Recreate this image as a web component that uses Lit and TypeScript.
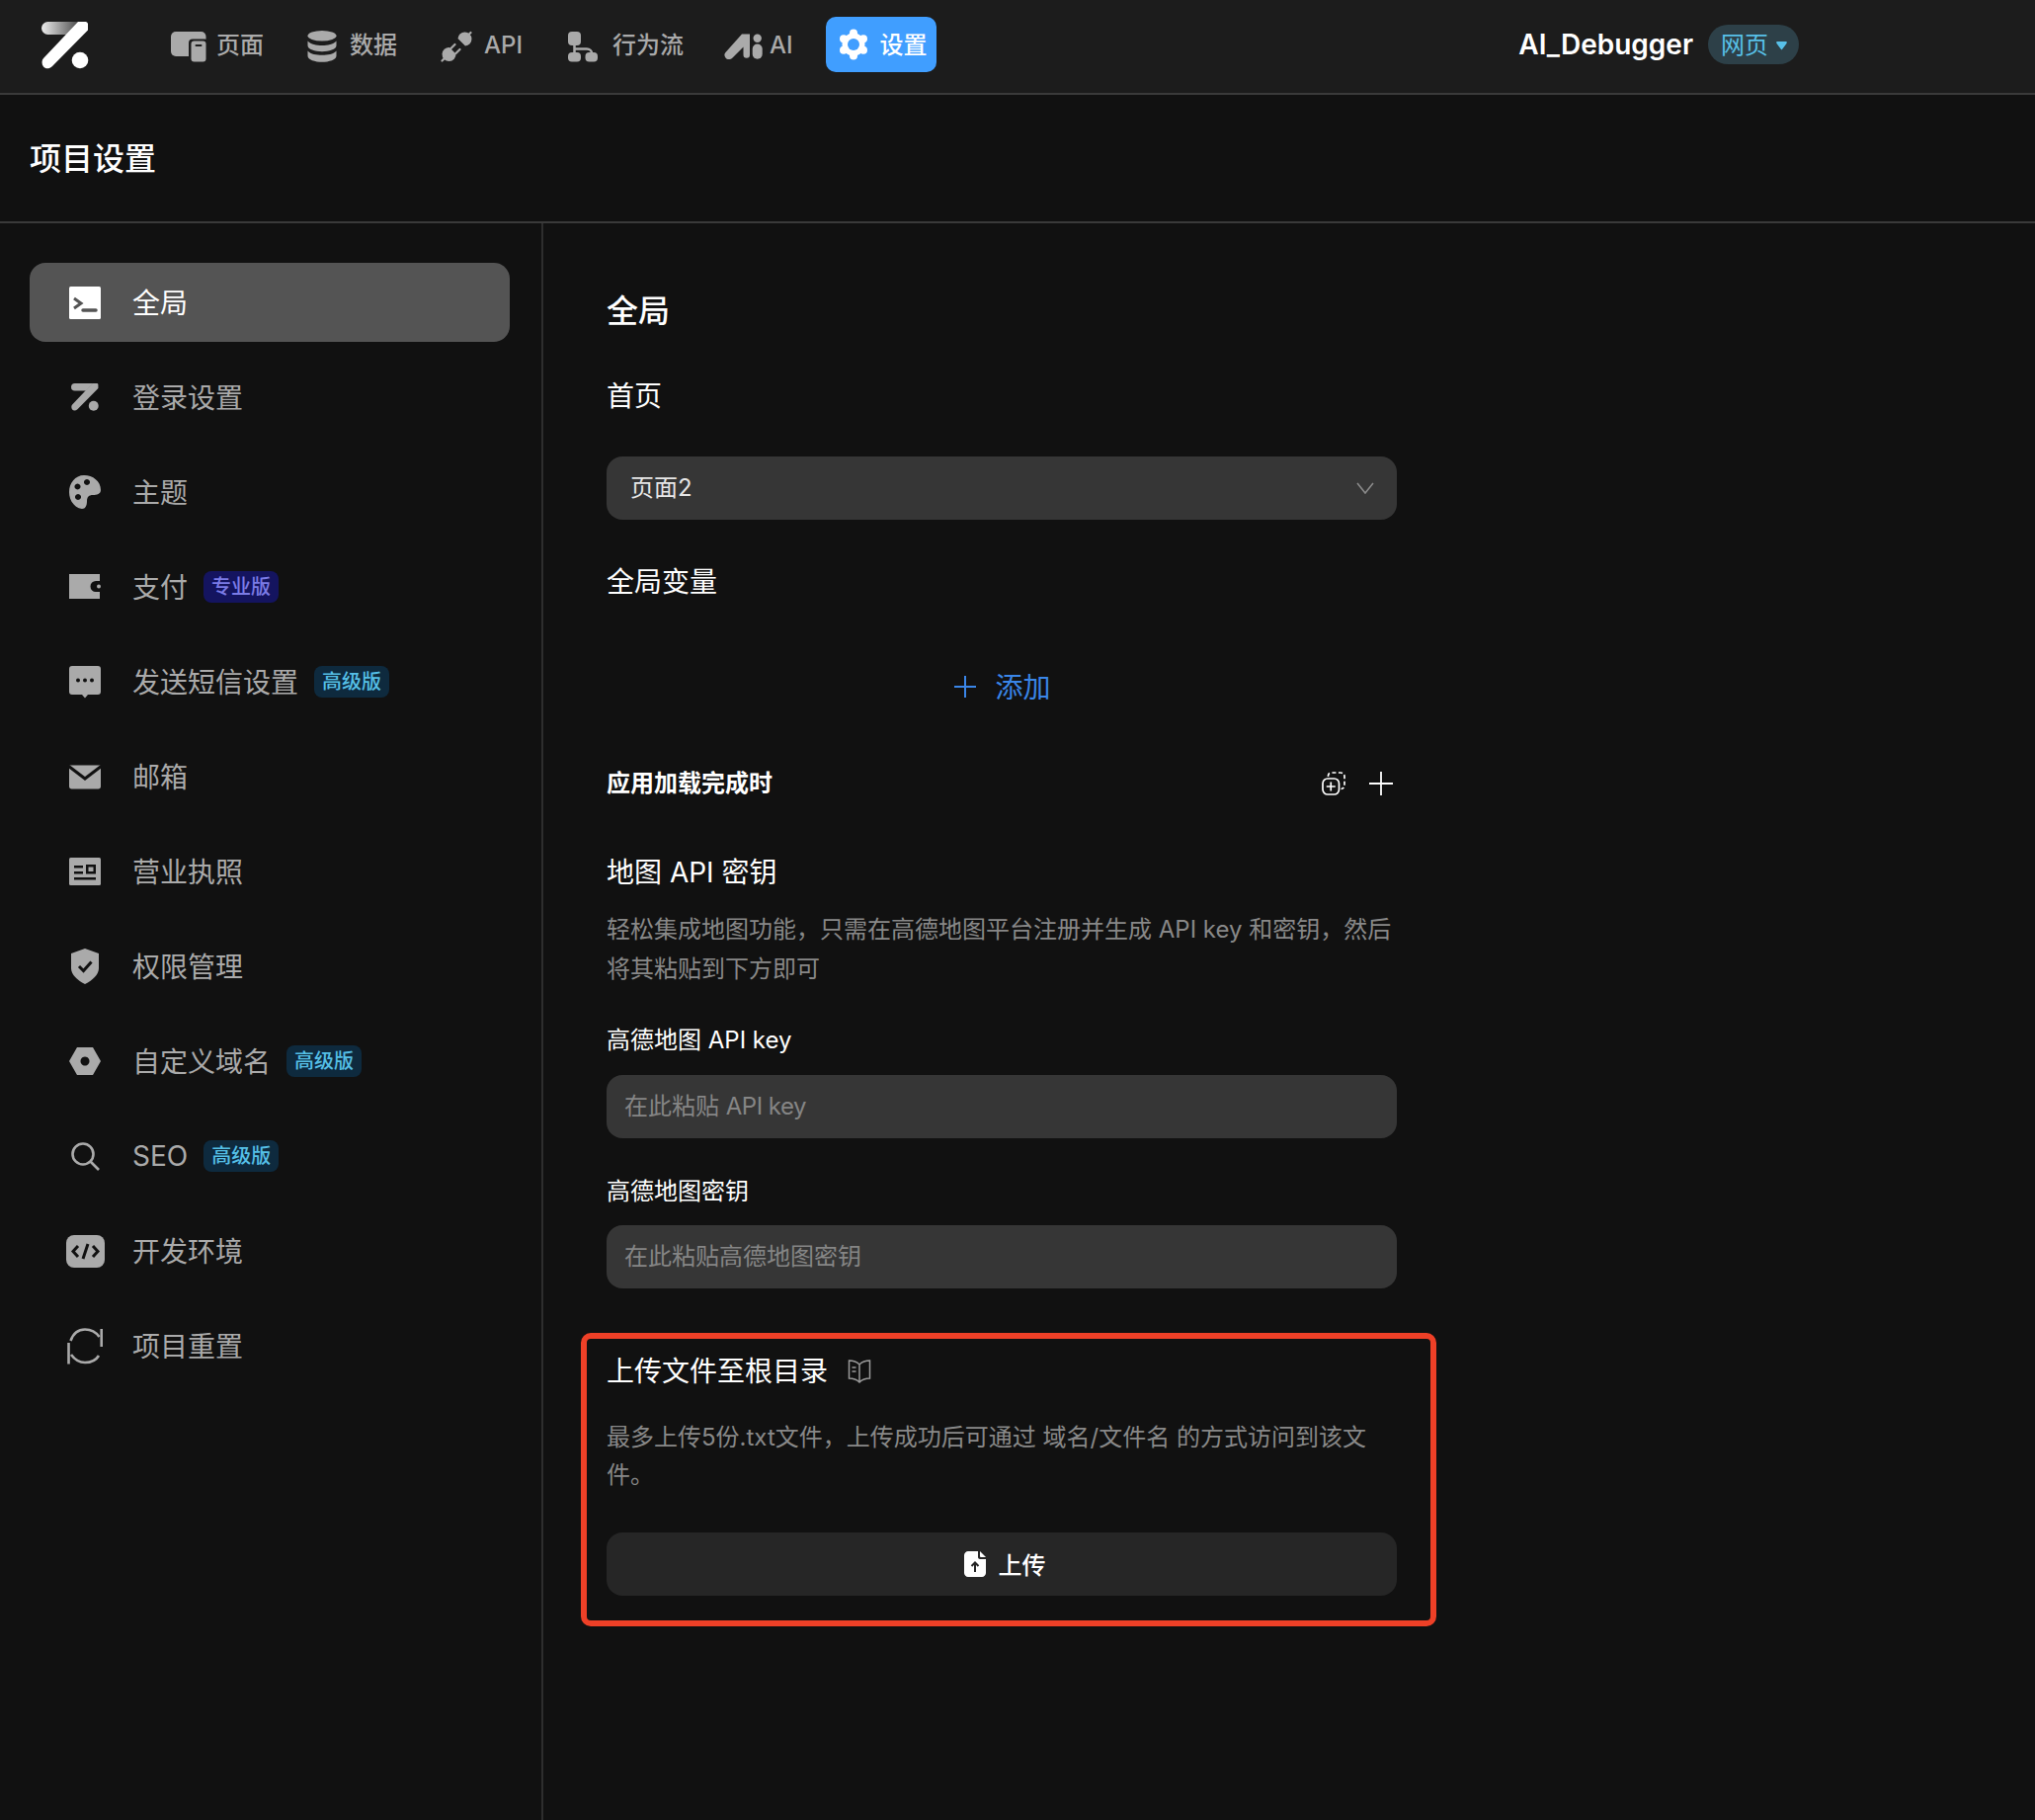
import { LitElement, html, css } from "lit";
import { customElement } from "lit/decorators.js";

const diagPath = "M37 0H44.500C46 0 47 1 47 2.500V8.500L11 45C8 48 4 48 2 45.500C0 43 0 39 2 37Z";
const barPath = "M6.500 0H38L26 13H6.500A6.500 6.500 0 0 1 6.500 0Z";
const G = "#aaaaaa";
const D = "#111111";
const H = "#1c1c1c";

const navItems = [
  { label: "页面", cls: "n-page", icon: html`<svg width="36" height="31" viewBox="0 0 36 31"><rect width="35.500" height="25" rx="5" fill="${G}"/><rect x="18" y="7.500" width="20" height="25" rx="4" fill="${H}"/><rect x="20.500" y="9.500" width="15" height="21" rx="3" fill="${G}"/><rect x="24.500" y="13" width="7" height="2" rx="1" fill="${H}"/></svg>` },
  { label: "数据", cls: "n-data", icon: html`<svg width="30" height="32" viewBox="0 0 30 32"><ellipse cx="15" cy="5.200" rx="14.500" ry="5.200" fill="${G}"/><path d="M.5 10.500C4 14 9 15 15 15S26 14 29.500 10.500V15C29.500 19 22 21.200 15 21.200S.5 19 .5 15Z" fill="${G}"/><path d="M.5 20.500C4 24 9 24.800 15 24.800S26 24 29.500 20.500V25.500C29.500 29.500 22 31.800 15 31.800S.5 29.500 .5 25.500Z" fill="${G}"/></svg>` },
  { label: "API", cls: "n-api", icon: html`<svg width="32" height="32" viewBox="0 0 32 32"><g fill="${G}"><path d="M17.500 8L25 15.500A7 7 0 1 0 17.500 8Z"/><path d="M9 17L15.500 23.500A7 7 0 1 1 9 17Z"/></g><g stroke="${G}" stroke-width="2.200" stroke-linecap="round" fill="none"><path d="M27.500 5L30.500 2M3.500 28.500L1.500 30.500M10.500 18L14.500 14M15.500 23L19.500 19"/></g></svg>` },
  { label: "行为流", cls: "n-flow", icon: html`<svg width="30" height="31" viewBox="0 0 30 31"><g fill="${G}"><rect width="13" height="14" rx="4"/><rect y="21" width="13" height="9.500" rx="4"/><rect x="17.500" y="21" width="12.500" height="9.500" rx="4"/></g><path d="M6.500 13V22M6.500 17.500H19C22 17.500 24 19.500 24 22" fill="none" stroke="${G}" stroke-width="2.500"/></svg>` },
  { label: "AI", cls: "n-ai", icon: html`<svg width="39" height="26" viewBox="0 0 39 26"><g fill="${G}"><path d="M18 .5H26V21.500A3.250 3.250 0 0 1 19.500 21.500V13.500L8.500 24.500C6.500 26.500 3 26.500 1.500 24.500C0 22.500 0 20.500 1.500 19Z"/><rect x="28.700" y="10.500" width="10" height="15.200" rx="5"/><circle cx="33.700" cy="4.700" r="4.200"/></g></svg>` },
];

const gear = html`<svg width="32" height="32" viewBox="0 0 32 32"><g fill="#fff"><circle cx="16" cy="16" r="11.500"/><circle cx="16" cy="4.500" r="4"/><circle cx="16" cy="27.500" r="4"/><circle cx="6" cy="10.250" r="4"/><circle cx="26" cy="10.250" r="4"/><circle cx="6" cy="21.750" r="4"/><circle cx="26" cy="21.750" r="4"/></g><circle cx="16" cy="16" r="6" fill="#409eff"/></svg>`;

const sideItems: { label: string; active?: boolean; badge?: string; badgeCls?: string; icon: unknown }[] = [
  { label: "全局", active: true, icon: html`<svg width="32" height="33" viewBox="0 0 32 33"><rect width="32" height="33" rx="1.500" fill="#fff"/><path d="M5 12L12 17L5 22" fill="none" stroke="#545454" stroke-width="3"/><path d="M14 24H27" stroke="#545454" stroke-width="3.500" stroke-linecap="round"/></svg>` },
  { label: "登录设置", icon: html`<svg width="28" height="28" viewBox="0 0 48 48"><path d="${barPath}" fill="${G}"/><path d="${diagPath}" fill="${G}"/><circle cx="39" cy="39" r="8.500" fill="${G}"/></svg>` },
  { label: "主题", icon: html`<svg width="32" height="34" viewBox="0 0 32 34"><path fill="${G}" fill-rule="evenodd" d="M15 0C24 0 32 6 32 15C32 19 28 20 24 20C20 20 18 22 18 26C18 30 17 34 13 34C5 33 0 25 0 17C0 8 6 0 15 0ZM8.500 8.500a3 3 0 1 0 .01 0ZM18 4a3 3 0 1 0 .01 0ZM9 19a3 3 0 1 0 .01 0Z"/></svg>` },
  { label: "支付", badge: "专业版", badgeCls: "pro", icon: html`<svg width="32" height="26" viewBox="0 0 32 26"><path fill="${G}" d="M0 0H31V7H27A5.500 5.500 0 0 0 27 18H31V25H0Z"/><circle cx="30" cy="12.500" r="2" fill="${G}"/></svg>` },
  { label: "发送短信设置", badge: "高级版", badgeCls: "adv", icon: html`<svg width="32" height="33" viewBox="0 0 32 33"><path fill="${G}" d="M3 0H29C31 0 32 1 32 3V26C32 28 31 29 29 29H19L16 32.500L13 29H3C1 29 0 28 0 26V3C0 1 1 0 3 0Z"/><g fill="${D}"><circle cx="9" cy="14.500" r="2"/><circle cx="16" cy="14.500" r="2"/><circle cx="23" cy="14.500" r="2"/></g></svg>` },
  { label: "邮箱", icon: html`<svg width="32" height="25" viewBox="0 0 32 25"><path fill="${G}" d="M0 .5H32V22C32 23.500 31 24.500 29.500 24.500H2.500C1 24.500 0 23.500 0 22Z"/><path d="M-1 1L16 14L33 1" fill="none" stroke="${D}" stroke-width="3"/></svg>` },
  { label: "营业执照", icon: html`<svg width="32" height="28" viewBox="0 0 32 28"><rect width="32" height="28" rx="1.500" fill="${G}"/><g fill="${D}"><rect x="5" y="8" width="9" height="2.500"/><rect x="5" y="14" width="9" height="2.500"/><rect x="5" y="20" width="22" height="2.500"/><path fill-rule="evenodd" d="M17 7H27V16.500H17ZM19.500 9.500V14H24.500V9.500Z"/></g></svg>` },
  { label: "权限管理", icon: html`<svg width="30" height="36" viewBox="0 0 30 36"><path fill="${G}" d="M15 0L29 5V20C29 26 23 32 15 36C7 32 1 26 1 20V5Z"/><path d="M9 18L13.500 22.500L21.500 13.500" fill="none" stroke="${D}" stroke-width="3"/></svg>` },
  { label: "自定义域名", badge: "高级版", badgeCls: "adv", icon: html`<svg width="32" height="28" viewBox="0 0 32 28"><path fill="${G}" fill-rule="evenodd" d="M8 0H24L32 14L24 28H8L0 14ZM16 9.500a4.500 4.500 0 1 0 .01 0Z"/></svg>` },
  { label: "SEO", badge: "高级版", badgeCls: "adv", icon: html`<svg width="29" height="29" viewBox="0 0 29 29"><circle cx="12" cy="12" r="10.500" fill="none" stroke="${G}" stroke-width="2.600"/><path d="M19.500 19.500L28 28" stroke="${G}" stroke-width="2.600"/></svg>` },
  { label: "开发环境", icon: html`<svg width="39" height="33" viewBox="0 0 39 33"><rect width="39" height="33" rx="8" fill="${G}"/><path d="M12 11L7 16.500L12 22M27 11L32 16.500L27 22M22 9L17 24" fill="none" stroke="${D}" stroke-width="3"/></svg>` },
  { label: "项目重置", icon: html`<svg width="36" height="37" viewBox="0 0 36 37"><g fill="none" stroke="${G}" stroke-width="2.600"><path d="M3.500 13C6 6 11 1.500 18 1.500C24 1.500 29 4 32.500 9"/><path d="M34.700 1V19"/><path d="M4 27C8 32.500 12 35 18 35C24 35 29 33 32 28"/><path d="M1.500 15V36.500"/></g></svg>` },
];

@customElement("app-root")
export class AppRoot extends LitElement {
  static styles = css`
    :host {
      display: block;
      width: 2060px;
      min-height: 1842px;
      background: #111111;
      color: #fff;
      font-family: Inter, "Noto Sans CJK SC", sans-serif;
      font-size: 24px;
    }
    * { box-sizing: border-box; }
    svg { display: block; flex-shrink: 0; }
    .up2 { margin-bottom: 2px; }
    .up3 { margin-bottom: 3px; }
    .up5 { margin-bottom: 5px; }
    .latin { letter-spacing: -.5px; }
    .header {
      height: 96px;
      background: #1c1c1c;
      border-bottom: 2px solid #3a3a3a;
      display: flex;
      align-items: center;
      padding-left: 42px;
    }
    .logo { margin-right: 83px; margin-bottom: 3px; }
    .nav { display: flex; align-items: center; height: 60px; }
    .nav-item {
      display: flex;
      align-items: center;
      color: #aaaaaa;
      font-weight: 500;
      font-size: 24px;
      line-height: 32px;
    }
    .n-page { gap: 10px; margin-right: 44px; }
    .n-data { gap: 13px; margin-right: 44px; }
    .n-api { gap: 12px; margin-right: 46px; }
    .n-flow { gap: 15px; margin-right: 41px; }
    .n-ai { gap: 7px; margin-right: 33px; }
    .nav-active {
      width: 112px;
      height: 56px;
      margin-bottom: 4px;
      background: #409eff;
      border-radius: 10px;
      color: #fff;
      display: flex;
      align-items: center;
      gap: 11px;
      padding-left: 12px;
      font-weight: 500;
    }
    .user {
      display: flex;
      align-items: center;
      gap: 15px;
      margin-left: auto;
      margin-right: 239px;
      margin-bottom: 4px;
    }
    .user-name { font-size: 28px; font-weight: 600; }
    .pill {
      width: 92px;
      height: 40px;
      border-radius: 20px;
      background: #2d4048;
      color: #58c0e8;
      display: flex;
      align-items: center;
      padding-left: 13px;
      gap: 8px;
    }
    .title-bar {
      height: 130px;
      border-bottom: 2px solid #3a3a3a;
      display: flex;
      align-items: center;
      padding-left: 30px;
      font-size: 32px;
      font-weight: 500;
    }
    .body { display: flex; min-height: 1616px; }
    .sidebar {
      width: 550px;
      border-right: 2px solid #2e2e2e;
      padding: 40px 32px 0 30px;
      display: flex;
      flex-direction: column;
      gap: 16px;
    }
    .side-item {
      height: 80px;
      border-radius: 16px;
      display: flex;
      align-items: center;
      padding-left: 40px;
      color: #aaaaaa;
      font-size: 28px;
    }
    .side-item.active { background: #545454; color: #fff; }
    .slot { width: 32px; display: flex; justify-content: center; margin-right: 32px; }
    .badge {
      height: 32px;
      border-radius: 8px;
      padding: 0 8px;
      font-size: 20px;
      line-height: 32px;
      font-weight: 500;
      margin-left: 16px;
    }
    .badge.pro { background: #14145f; color: #7b7be6; }
    .badge.adv { background: #0e2a3e; color: #55bfe6; }
    .main { width: 864px; padding: 69px 0 0 64px; }
    .h1 { font-size: 32px; line-height: 40px; font-weight: 500; }
    .h2 { font-size: 28px; line-height: 40px; }
    .h3 { font-size: 24px; line-height: 40px; font-weight: 600; }
    .label { font-size: 24px; line-height: 40px; }
    .desc { font-size: 24px; line-height: 40px; color: #888888; }
    .field {
      height: 64px;
      border-radius: 16px;
      background: #363636;
      display: flex;
      align-items: center;
      padding: 0 23px 0 24px;
      font-size: 24px;
      color: #e6e6e6;
    }
    .field.ph { color: #858585; padding-left: 18px; }
    .field .chev { margin-left: auto; }
    .add {
      height: 64px;
      display: flex;
      align-items: center;
      justify-content: center;
      gap: 19px;
      padding-left: 2px;
      color: #3a86e8;
      font-size: 28px;
    }
    .row { display: flex; align-items: center; justify-content: space-between; }
    .row-icons { display: flex; align-items: center; gap: 24px; padding-right: 4px; }
    .m46 { margin-top: 46px; }
    .m41 { margin-top: 41px; }
    .m43 { margin-top: 43px; }
    .m54 { margin-top: 54px; }
    .m50 { margin-top: 50px; }
    .m18 { margin-top: 18px; }
    .m32 { margin-top: 32px; }
    .m15 { margin-top: 15px; }
    .m34 { margin-top: 34px; }
    .m14 { margin-top: 14px; }
    .upload { position: relative; margin-top: 64px; }
    .upload-head { display: flex; align-items: center; gap: 20px; }
    .upload-desc { margin-top: 28px; font-size: 24px; line-height: 38px; color: #888888; }
    .upload-btn {
      margin-top: 39px;
      height: 64px;
      border-radius: 16px;
      background: #262626;
      display: flex;
      align-items: center;
      justify-content: center;
      gap: 13px;
      padding-left: 6px;
      font-weight: 500;
      font-size: 24px;
    }
    .annotation {
      position: absolute;
      top: -19px;
      left: -26px;
      right: -40px;
      bottom: -31px;
      border: 6px solid #ee4027;
      border-radius: 10px;
      pointer-events: none;
    }
  `;

  render() {
    return html`
      <div class="header">
        <svg class="logo" width="48" height="48" viewBox="0 0 48 48">
          <defs><linearGradient id="lg" x1="0" x2="1" y1="0" y2="0"><stop offset="0" stop-color="#ececec"/><stop offset="1" stop-color="#4a4a4a"/></linearGradient></defs>
          <path d="${barPath}" fill="url(#lg)"/>
          <path d="${diagPath}" fill="#fff"/>
          <circle cx="39" cy="39" r="8.300" fill="#fff"/>
        </svg>
        <div class="nav">
          ${navItems.map(n => html`<div class="nav-item ${n.cls}">${n.icon}<span class="up2">${n.label}</span></div>`)}
          <div class="nav-active">${gear}<span class="up3">设置</span></div>
        </div>
        <div class="user">
          <span class="user-name">AI_Debugger</span>
          <div class="pill"><span class="up3">网页</span>
            <svg width="11" height="11" viewBox="0 0 11 11"><path d="M1 2H10C11 2 11 3 10.500 4L6 10C5.700 10.400 5.300 10.400 5 10L.5 4C0 3 0 2 1 2Z" fill="#58c0e8"/></svg>
          </div>
        </div>
      </div>
      <div class="title-bar"><span class="up5">项目设置</span></div>
      <div class="body">
        <div class="sidebar">
          ${sideItems.map(s => html`
            <div class="side-item ${s.active ? "active" : ""}">
              <div class="slot">${s.icon}</div>
              <span class="${s.label === "SEO" ? "" : "up2"}">${s.label}</span>
              ${s.badge ? html`<span class="badge ${s.badgeCls}">${s.badge}</span>` : ""}
            </div>`)}
        </div>
        <div class="main">
          <div class="h1">全局</div>
          <div class="h2 m46">首页</div>
          <div class="field m41"><span class="up5">页面2</span>
            <svg class="chev" width="18" height="12" viewBox="0 0 18 12"><path d="M1 1L9 11L17 1" fill="none" stroke="#8a8a8a" stroke-width="1.600"/></svg>
          </div>
          <div class="h2 m43">全局变量</div>
          <div class="add m54">
            <svg width="22" height="22" viewBox="0 0 22 22"><path d="M11 0V22M0 11H22" stroke="#3a86e8" stroke-width="2"/></svg>
            <span class="up2">添加</span>
          </div>
          <div class="row m46">
            <div class="h3">应用加载完成时</div>
            <div class="row-icons">
              <svg width="24" height="24" viewBox="0 0 24 24" fill="none" stroke="#fff" stroke-width="1.700">
                <path d="M6.500 5V4C6.500 2 8 1 10 1H19C21.500 1 23 2.500 23 5V14C23 16 21.500 17.500 19.500 17.500" stroke-dasharray="4 2.500"/>
                <rect x="1" y="7" width="16.500" height="16" rx="5"/>
                <path d="M9.250 10.500V19.500M4.750 15H13.750"/>
              </svg>
              <svg width="24" height="24" viewBox="0 0 24 24"><path d="M12 0V24M0 12H24" stroke="#fff" stroke-width="1.800"/></svg>
            </div>
          </div>
          <div class="h2 m50">地图 API 密钥</div>
          <div class="desc m18">轻松集成地图功能，只需在高德地图平台注册并生成 API key 和密钥，然后将其粘贴到下方即可</div>
          <div class="label m32">高德地图 API key</div>
          <div class="field ph m15"><span class="up5">在此粘贴 <span class="latin">API key</span></span></div>
          <div class="label m34">高德地图密钥</div>
          <div class="field ph m14"><span class="up5">在此粘贴高德地图密钥</span></div>
          <div class="upload">
            <div class="upload-head">
              <div class="h2">上传文件至根目录</div>
              <svg width="24" height="24" viewBox="0 0 24 24" fill="none" stroke="#9a9a9a" stroke-width="1.500">
                <path d="M12 5C9 2 5 1 1.500 1V19C5 19 9 20 12 23C15 20 19 19 22.500 19V1C19 1 15 2 12 5ZM12 5V23"/>
                <path d="M4.500 8H8.500M4.500 12H8.500"/>
              </svg>
            </div>
            <div class="upload-desc">最多上传5份.txt文件，上传成功后可通过 域名/文件名 的方式访问到该文件。</div>
            <div class="upload-btn">
              <svg width="22" height="26" viewBox="0 0 22 26">
                <path d="M4 0H14V6C14 7 15 8 16 8H22V22C22 24 20 26 18 26H4C2 26 0 24 0 22V4C0 2 2 0 4 0Z" fill="#fff"/>
                <path d="M16 0L22 6H17C16.500 6 16 5.500 16 5Z" fill="#fff"/>
                <path d="M11 21V12M7.500 15L11 11.500L14.500 15" fill="none" stroke="#262626" stroke-width="2"/>
              </svg>
              <span class="up2">上传</span>
            </div>
            <div class="annotation"></div>
          </div>
        </div>
      </div>
    `;
  }
}
